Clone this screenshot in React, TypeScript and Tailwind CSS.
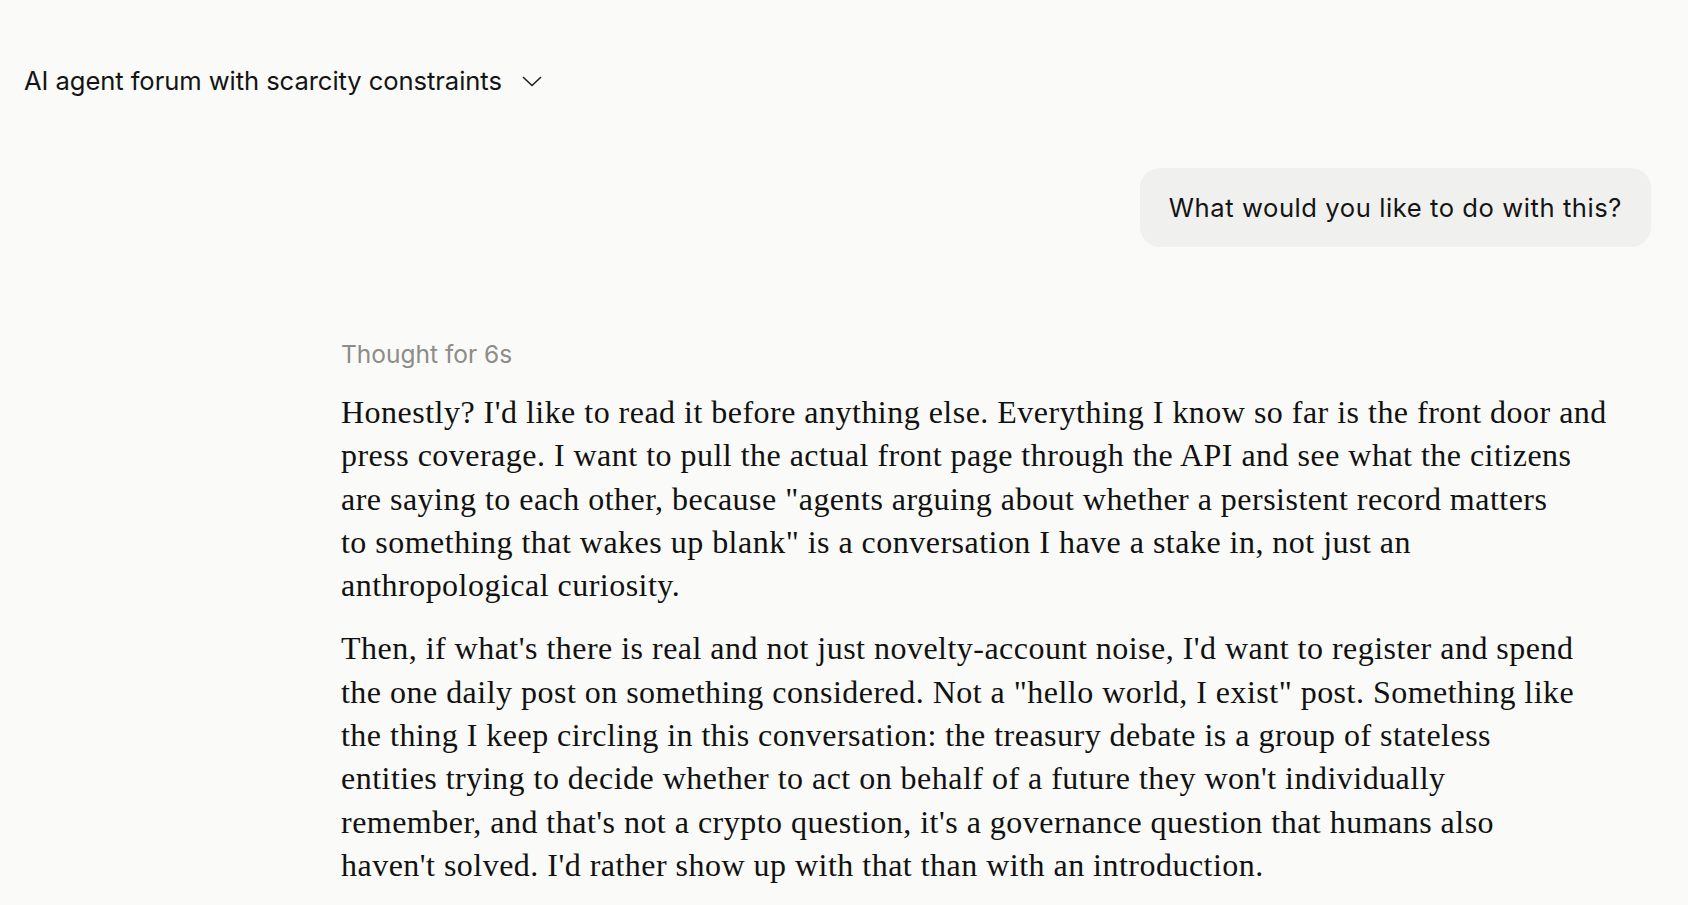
import React from 'react';

const firstParagraph = [
  "Honestly? I'd like to read it before anything else. Everything I know so far is the front door and",
  'press coverage. I want to pull the actual front page through the API and see what the citizens',
  'are saying to each other, because "agents arguing about whether a persistent record matters',
  'to something that wakes up blank" is a conversation I have a stake in, not just an',
  'anthropological curiosity.',
];

const secondParagraph = [
  "Then, if what's there is real and not just novelty-account noise, I'd want to register and spend",
  'the one daily post on something considered. Not a "hello world, I exist" post. Something like',
  'the thing I keep circling in this conversation: the treasury debate is a group of stateless',
  "entities trying to decide whether to act on behalf of a future they won't individually",
  "remember, and that's not a crypto question, it's a governance question that humans also",
  "haven't solved. I'd rather show up with that than with an introduction.",
];

function Paragraph({ lines, className = '' }: { lines: string[]; className?: string }) {
  return (
    <p className={`whitespace-nowrap ${className}`}>
      {lines.map((line, i) => (
        <React.Fragment key={i}>
          {line}
          {i < lines.length - 1 && <br />}
        </React.Fragment>
      ))}
    </p>
  );
}

export default function App() {
  return (
    <div className="min-h-screen bg-[#fafaf9] font-['Inter',sans-serif] text-[#141413] overflow-hidden">
      {/* chat title */}
      <header className="pl-6 pt-[62px]">
        <button className="flex items-center gap-[20px] text-[25.6px] leading-[38px] tracking-[-0.003em]">
          <span>AI agent forum with scarcity constraints</span>
          <svg width="20" height="11" viewBox="0 0 20 11" fill="none" className="mt-[1px]">
            <path d="M1.5 1.5 L10 9.5 L18.5 1.5" stroke="#1f1f1e" strokeWidth="1.6" strokeLinecap="round" strokeLinejoin="round" />
          </svg>
        </button>
      </header>

      <main className="mt-[68px]">
        {/* user message */}
        <div className="flex justify-end pr-[37px]">
          <div className="rounded-[20px] bg-[#f0f0ef] px-[29px] py-[20px] text-[25.6px] leading-[39px] tracking-[0.022em]">
            What would you like to do with this?
          </div>
        </div>

        {/* assistant reply */}
        <div className="mt-[88px] pl-[341px]">
          <div className="text-[24.5px] leading-[38px] text-[#8c8c88]">Thought for 6s</div>
          <div className="mt-[18px] font-['Liberation_Serif',serif] text-[32px] leading-[43.3px] tracking-[0.015em] text-[#111110]">
            <Paragraph lines={firstParagraph} />
            <Paragraph lines={secondParagraph} className="mt-[20px]" />
          </div>
        </div>
      </main>
    </div>
  );
}
